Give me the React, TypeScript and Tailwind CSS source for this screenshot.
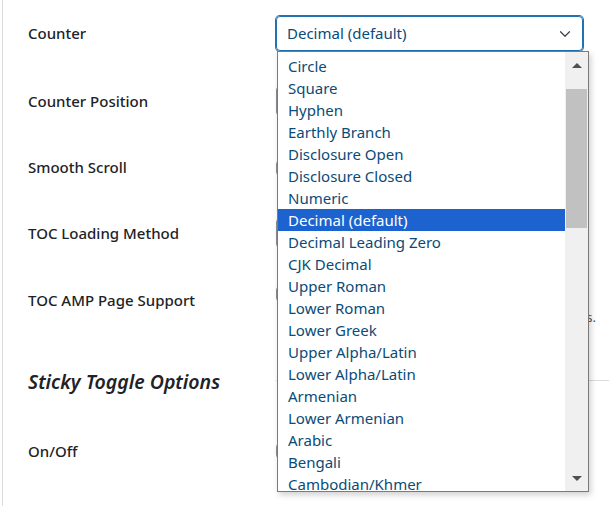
import { ChevronDown } from "lucide-react";

const OPTIONS = [
  "Circle",
  "Square",
  "Hyphen",
  "Earthly Branch",
  "Disclosure Open",
  "Disclosure Closed",
  "Numeric",
  "Decimal (default)",
  "Decimal Leading Zero",
  "CJK Decimal",
  "Upper Roman",
  "Lower Roman",
  "Lower Greek",
  "Upper Alpha/Latin",
  "Lower Alpha/Latin",
  "Armenian",
  "Lower Armenian",
  "Arabic",
  "Bengali",
  "Cambodian/Khmer",
];

const font = "font-['Noto_Sans','Open_Sans',sans-serif]";

export default function App() {
  return (
    <div className={`relative h-[506px] w-[609px] overflow-hidden bg-white pl-[2px] ${font}`}>
      <div className="h-full border-l border-[#dcdcde] pl-[25px]">
        <Row h="h-[67px]" label="Counter">
          <div className="flex h-[35px] w-[307px] items-center justify-between rounded-[4px] border border-[#2271b1] pl-[10px] pr-[8px] text-[15px] text-[#0a4b78] shadow-[0_0_0_1px_#2271b1]">
            Decimal (default)
            <ChevronDown className="h-[18px] w-[18px] text-[#3c434a]" strokeWidth={1.6} />
          </div>
        </Row>
        <Row h="h-[68px]" label="Counter Position">
          <div className="h-[30px] w-[200px] rounded-[4px] border border-[#8c8f94]" />
        </Row>
        <Row h="h-[65px]" label="Smooth Scroll">
          <div className="h-[16px] w-[16px] rounded-[4px] border border-[#8c8f94]" />
        </Row>
        <Row h="h-[66px]" label="TOC Loading Method">
          <div className="h-[30px] w-[200px] rounded-[4px] border border-[#8c8f94]" />
        </Row>
        <Row h="h-[68px]" label="TOC AMP Page Support">
          <div className="flex w-[320px] flex-col gap-[6px] pt-[14px]">
            <div className="h-[16px] w-[16px] rounded-[4px] border border-[#8c8f94]" />
            <p className="text-right text-[13px] text-[#50575e]">in the plugin settings.</p>
          </div>
        </Row>
        <div className="flex h-[96px] items-center">
          <h3 className="w-[248px] shrink-0 text-[19.5px] font-semibold italic text-[#1d2327]">
            Sticky Toggle Options
          </h3>
          <div className="-mt-[4px] h-px flex-1 bg-[#dcdcde]" />
        </div>
        <Row h="h-[42px]" label="On/Off">
          <div className="h-[16px] w-[16px] rounded-[4px] border border-[#8c8f94]" />
        </Row>
      </div>

      {/* open dropdown list */}
      <div className="absolute left-[277px] top-[51px] flex h-[441px] w-[312px] border border-[#7a7a7a] bg-white shadow-[2px_3px_6px_rgba(0,0,0,0.18)]">
        <ul className="flex-1 pt-[3px] text-[15px] text-[#0a4b78]">
          {OPTIONS.map((o) => (
            <li
              key={o}
              className={
                o === "Decimal (default)"
                  ? "flex h-[22px] items-center bg-[#1c63cf] pl-[10px] text-white"
                  : "flex h-[22px] items-center pl-[10px]"
              }
            >
              {o}
            </li>
          ))}
        </ul>
        <div className="flex w-[23px] flex-col bg-[#f0f0f0]">
          <div className="flex h-[26px] items-center justify-center">
            <span className="h-0 w-0 border-x-[5px] border-b-[5px] border-x-transparent border-b-[#505050]" />
          </div>
          <div className="mx-[1px] mt-[11px] h-[139px] bg-[#c1c1c1]" />
          <div className="flex-1" />
          <div className="flex h-[26px] items-center justify-center">
            <span className="h-0 w-0 border-x-[5px] border-t-[5px] border-x-transparent border-t-[#505050]" />
          </div>
        </div>
      </div>
    </div>
  );
}

function Row({
  h,
  label,
  children,
}: {
  h: string;
  label: string;
  children: React.ReactNode;
}) {
  return (
    <div className={`flex ${h} items-center`}>
      <div className="w-[248px] shrink-0 text-[15px] font-medium text-[#1d2327]">{label}</div>
      {children}
    </div>
  );
}
